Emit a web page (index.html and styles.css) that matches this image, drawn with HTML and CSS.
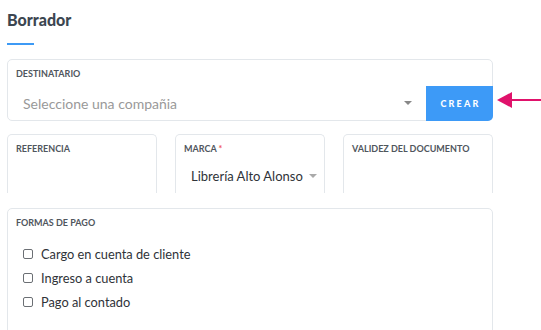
FILE: index.html
```html
<!DOCTYPE html>
<html lang="es">
<head>
  <meta charset="UTF-8" />
  <title>Borrador</title>
  <link rel="stylesheet" href="styles.css">
</head>
<body>
  <div class="page">
    <h1 class="title">Borrador</h1>
    <div class="title-bar"></div>

    <div class="row-dest">
      <div class="card card-dest">
        <div class="label">Destinatario</div>
        <div class="dest-line">
          <div class="select placeholder">
            <span>Seleccione una compañia</span>
            <span class="caret"></span>
          </div>
          <button class="btn">Crear</button>
        </div>
      </div>
      <svg class="pointer" width="44" height="20" viewBox="0 0 44 20">
        <line x1="12" y1="10" x2="44" y2="10" stroke="#e0126b" stroke-width="2"/>
        <polygon points="0,10 15,2 15,18" fill="#e0126b"/>
      </svg>
    </div>

    <div class="row-three">
      <div class="card card-cut">
        <div class="label">Referencia</div>
      </div>
      <div class="card card-cut">
        <div class="label">Marca <span class="req">*</span></div>
        <div class="select value">
          <span>Librería Alto Alonso</span>
          <span class="caret"></span>
        </div>
      </div>
      <div class="card card-cut">
        <div class="label">Validez del documento</div>
      </div>
    </div>

    <div class="card card-pay">
      <div class="label">Formas de pago</div>
      <ul class="checks">
        <li><span class="box"></span>Cargo en cuenta de cliente</li>
        <li><span class="box"></span>Ingreso a cuenta</li>
        <li><span class="box"></span>Pago al contado</li>
      </ul>
    </div>
  </div>
</body>
</html>
```

FILE: styles.css
```css
body {
  margin: 0;
  background: #fff;
  font-family: 'Lato', 'Liberation Sans', sans-serif;
  color: #333;
}
.page {
  padding: 10px 0 0 7px;
}
.title {
  margin: 0;
  font-size: 16px;
  font-weight: 900;
  color: #3c4650;
  line-height: 20px;
}
.title-bar {
  width: 27px;
  height: 2px;
  background: #3d9af5;
  margin-top: 13px;
}
.card {
  background: #fff;
  border: 1px solid #e3e7eb;
  border-radius: 5px;
  box-sizing: border-box;
}
.label {
  font-size: 9px;
  font-weight: 700;
  text-transform: uppercase;
  color: #50565d;
  padding: 9px 8px 0;
  line-height: 10px;
  white-space: nowrap;
}
.req {
  color: #f05a5a;
}
.row-dest {
  display: flex;
  align-items: center;
  gap: 4px;
  margin-top: 14px;
}
.card-dest {
  width: 486px;
  height: 62px;
  display: flex;
  flex-direction: column;
  justify-content: space-between;
}
.dest-line {
  display: flex;
  align-items: stretch;
  height: 34px;
}
.select {
  display: flex;
  align-items: center;
  justify-content: space-between;
  font-size: 14px;
  white-space: nowrap;
}
.placeholder {
  flex: 1;
  color: #999;
  padding: 0 14px 0 15px;
}
.caret {
  width: 0;
  height: 0;
  border-left: 4px solid transparent;
  border-right: 4px solid transparent;
  border-top: 4px solid #888;
}
.btn {
  width: 67px;
  border: none;
  margin: 0 -1px -1px 0;
  border-radius: 0 0 5px 0;
  background: #3d9af7;
  color: #fff;
  font-family: inherit;
  font-size: 9px;
  font-weight: 900;
  letter-spacing: 2.2px;
  text-transform: uppercase;
  padding: 0 0 0 2px;
}
.pointer {
  display: block;
  margin-top: 20px;
}
.row-three {
  display: flex;
  gap: 18px;
  margin-top: 13px;
}
.card-cut {
  width: 150px;
  height: 59px;
  border-bottom: none;
  border-radius: 5px 5px 0 0;
}
.value {
  font-size: 13px;
  color: #2f3338;
  padding: 14px 10px 0 15px;
  gap: 6px;
}
.value .caret {
  border-top-color: #aaa;
}
.card-pay {
  width: 486px;
  height: 130px;
  margin-top: 15px;
}
.checks {
  list-style: none;
  margin: 14px 0 0;
  padding: 0 0 0 15px;
}
.checks li {
  display: flex;
  align-items: center;
  height: 24px;
  font-size: 12.8px;
  color: #2f3338;
}
.box {
  width: 8px;
  height: 8px;
  border: 1px solid #6b6f74;
  border-radius: 2px;
  margin-right: 8px;
}
```
